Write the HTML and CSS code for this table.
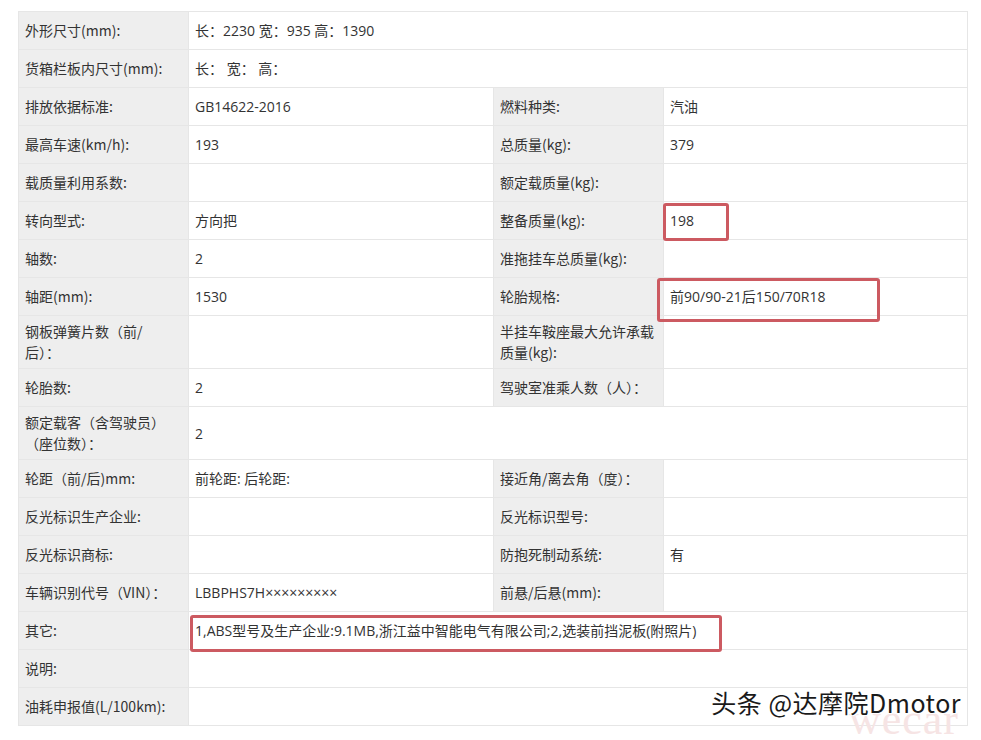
FILE: index.html
```html
<!DOCTYPE html>
<html lang="zh-CN">
<head>
    <meta charset="UTF-8">
    <meta name="viewport" content="width=device-width, initial-scale=1.0">
    <title>车辆参数</title>
    <link rel="stylesheet" href="styles.css">
</head>
<body>
    <div class="page">
        <table class="spec">
            <colgroup>
                <col class="c-label">
                <col class="c-value">
                <col class="c-label">
                <col class="c-value2">
            </colgroup>
            <tr>
                <td class="label">外形尺寸(mm):</td>
                <td colspan="3">长：2230 宽：935 高：1390</td>
            </tr>
            <tr>
                <td class="label">货箱栏板内尺寸(mm):</td>
                <td colspan="3">长： 宽： 高：</td>
            </tr>
            <tr>
                <td class="label">排放依据标准:</td>
                <td>GB14622-2016</td>
                <td class="label">燃料种类:</td>
                <td>汽油</td>
            </tr>
            <tr>
                <td class="label">最高车速(km/h):</td>
                <td>193</td>
                <td class="label">总质量(kg):</td>
                <td>379</td>
            </tr>
            <tr>
                <td class="label">载质量利用系数:</td>
                <td></td>
                <td class="label">额定载质量(kg):</td>
                <td></td>
            </tr>
            <tr>
                <td class="label">转向型式:</td>
                <td>方向把</td>
                <td class="label">整备质量(kg):</td>
                <td class="marked"><span class="mark mark-weight"></span>198</td>
            </tr>
            <tr>
                <td class="label">轴数:</td>
                <td>2</td>
                <td class="label">准拖挂车总质量(kg):</td>
                <td></td>
            </tr>
            <tr>
                <td class="label">轴距(mm):</td>
                <td>1530</td>
                <td class="label">轮胎规格:</td>
                <td class="marked"><span class="mark mark-tyre"></span>前90/90-21后150/70R18</td>
            </tr>
            <tr>
                <td class="label">钢板弹簧片数（前/<br>后）：</td>
                <td></td>
                <td class="label">半挂车鞍座最大允许承载质量(kg):</td>
                <td></td>
            </tr>
            <tr>
                <td class="label">轮胎数:</td>
                <td>2</td>
                <td class="label">驾驶室准乘人数（人）：</td>
                <td></td>
            </tr>
            <tr>
                <td class="label">额定载客（含驾驶员）<br>（座位数）：</td>
                <td colspan="3">2</td>
            </tr>
            <tr>
                <td class="label">轮距（前/后)mm:</td>
                <td>前轮距: 后轮距:</td>
                <td class="label">接近角/离去角（度）：</td>
                <td></td>
            </tr>
            <tr>
                <td class="label">反光标识生产企业:</td>
                <td></td>
                <td class="label">反光标识型号:</td>
                <td></td>
            </tr>
            <tr>
                <td class="label">反光标识商标:</td>
                <td></td>
                <td class="label">防抱死制动系统:</td>
                <td>有</td>
            </tr>
            <tr>
                <td class="label">车辆识别代号（VIN）：</td>
                <td>LBBPHS7H×××××××××</td>
                <td class="label">前悬/后悬(mm):</td>
                <td></td>
            </tr>
            <tr>
                <td class="label">其它:</td>
                <td colspan="3" class="marked"><span class="mark mark-other"></span>1,ABS型号及生产企业:9.1MB,浙江益中智能电气有限公司;2,选装前挡泥板(附照片)</td>
            </tr>
            <tr>
                <td class="label">说明:</td>
                <td colspan="3"></td>
            </tr>
            <tr>
                <td class="label">油耗申报值(L/100km):</td>
                <td colspan="3"></td>
            </tr>
        </table>

        <div class="watermark">
            <span class="wm-back">wecar</span>
            <span class="wm-front">头条 @达摩院Dmotor</span>
        </div>
    </div>
</body>
</html>
```

FILE: styles.css
```css
body {
    margin: 0;
    background: #fff;
    font-family: "Open Sans", "Noto Sans CJK SC", sans-serif;
    color: #333;
}
.page {
    position: relative;
    width: 981px;
    height: 740px;
    overflow: hidden;
}
.spec {
    margin: 11px 0 0 18px;
    width: 949px;
    table-layout: fixed;
    border-collapse: collapse;
    font-size: 14px;
}
.c-label {
    width: 170px;
}
.c-value {
    width: 305px;
}
.c-value2 {
    width: 304px;
}
.spec tr {
    height: 38px;
}
.spec td {
    border: 1px solid #e6e6e6;
    padding: 5px 8px 5px 6px;
    line-height: 21px;
    vertical-align: middle;
    background: #fff;
}
.spec td.label {
    background: #eeeeee;
    padding-right: 9px;
    font-family: "Noto Sans CJK SC", sans-serif;
}
.marked {
    position: relative;
}
.mark {
    position: absolute;
    border: 3px solid #cc5a61;
    border-radius: 3px;
    box-sizing: border-box;
}
.mark-weight {
    left: -1px;
    top: 1px;
    width: 66px;
    height: 38px;
}
.mark-tyre {
    left: -7px;
    top: 0;
    width: 223px;
    height: 44px;
}
.mark-other {
    left: 1px;
    top: 3px;
    width: 532px;
    height: 37px;
}
.marked {
    padding-left: 7px;
}
.watermark {
    position: absolute;
    right: 20px;
    top: 684px;
    height: 56px;
    width: 270px;
}
.wm-back {
    position: absolute;
    right: 2px;
    top: 10px;
    font-family: "Liberation Serif", serif;
    font-size: 44px;
    color: #f6e4e4;
    letter-spacing: 1px;
}
.wm-front {
    position: absolute;
    right: 0;
    top: 0;
    font-family: "Noto Sans CJK SC", sans-serif;
    font-size: 25px;
    letter-spacing: 0.5px;
    color: #1a1a1a;
    text-shadow: 1px 1px 0 #fff, -1px -1px 0 #fff, 1px -1px 0 #fff, -1px 1px 0 #fff;
}
```
